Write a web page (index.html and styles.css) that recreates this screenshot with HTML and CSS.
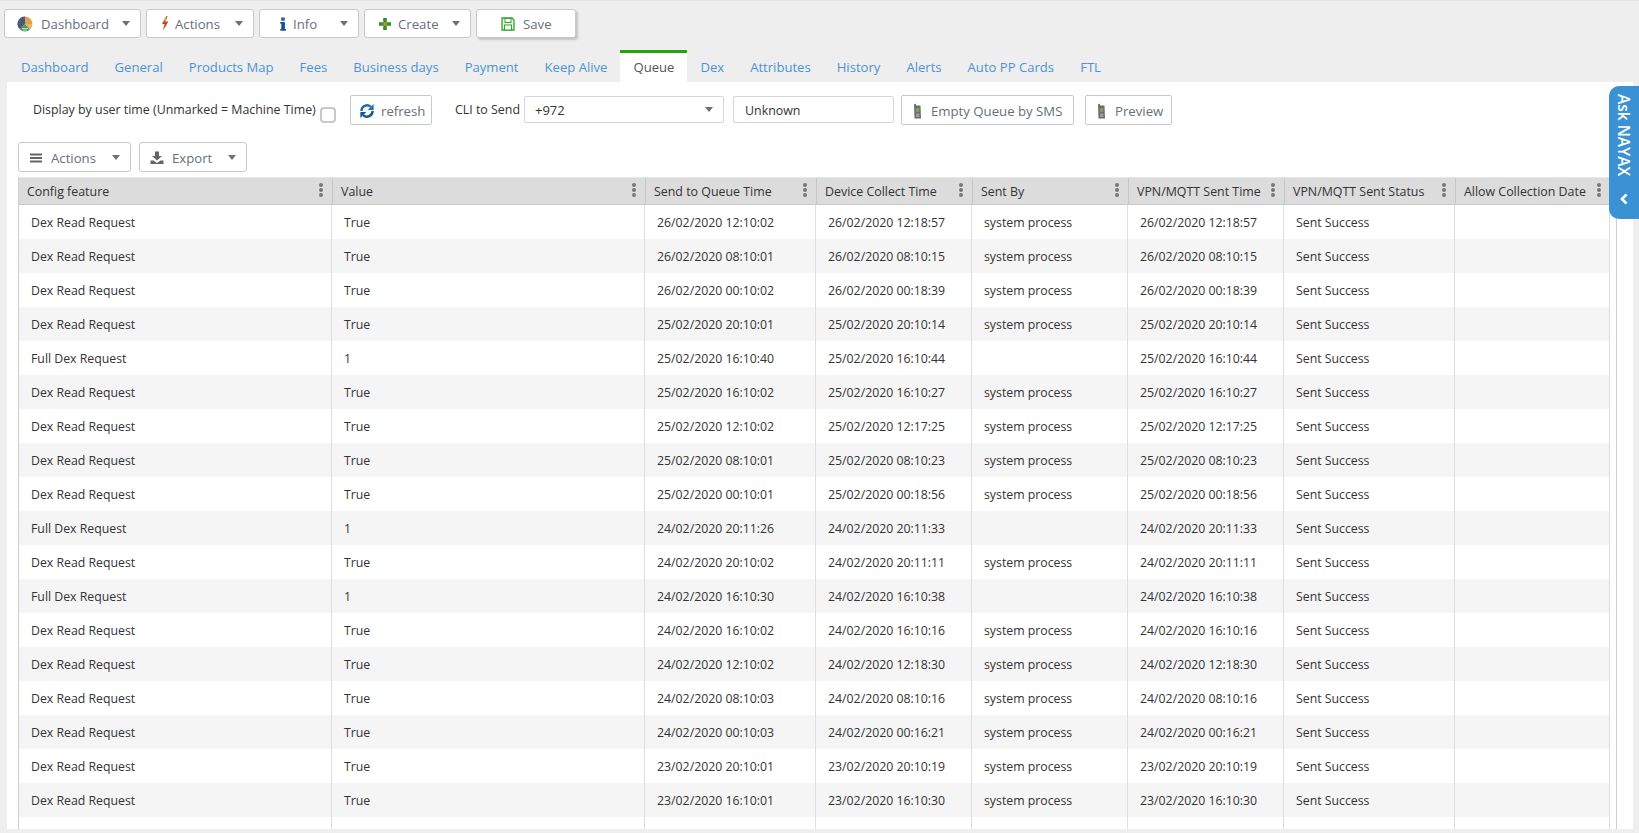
FILE: index.html
```html
<!DOCTYPE html>
<html lang="en">
<head>
<meta charset="utf-8">
<title>Queue</title>
<link rel="stylesheet" href="styles.css">
</head>
<body>
<div class="toolbar">
  <button class="btn tb-dash"><svg class="ico16" viewBox="0 0 16 16"><path d="M8 0.5A7.5 7.5 0 0 0 3 13.6L8 8Z" fill="#4a5a78"/><path d="M8 0.5A7.5 7.5 0 0 1 15.5 8H8Z" fill="#e0a24e"/><path d="M15.5 8A7.5 7.5 0 0 1 13 13.6L8 8Z" fill="#e8b46a"/><path d="M3 13.6A7.5 7.5 0 0 0 13 13.6L8 8Z" fill="#4c9a5a"/><path d="M5 12.5h6M6 14h4" stroke="#cfe8d2" stroke-width=".8"/></svg><span>Dashboard</span><i class="caret"></i></button>
  <button class="btn tb-act"><svg class="ico-s" viewBox="0 0 8 15"><path d="M5.5 0 1 8h2.6L1.8 15 7.4 5.6H4.6L6.6 0Z" fill="#c8401c"/><path d="M5.5 0 3.2 5.5h1.8" fill="#e9a13b"/></svg><span>Actions</span><i class="caret"></i></button>
  <button class="btn tb-info"><svg class="ico-i" viewBox="0 0 6 14"><rect x="1.2" y="0.5" width="3.6" height="3.2" fill="#1c5f9e"/><path d="M0.3 5h4.6v7h1v1.7H0.3V12h1V6.7h-1Z" fill="#1c4f8e"/></svg><span>Info</span><i class="caret"></i></button>
  <button class="btn tb-create"><svg class="ico14" viewBox="0 0 14 14"><path d="M5.2 1h3.6v4.2H13v3.6H8.8V13H5.2V8.8H1V5.2h4.2Z" fill="#2f8f2c"/><rect x="5.2" y="5.2" width="3.6" height="3.6" fill="#b9962a"/></svg><span>Create</span><i class="caret"></i></button>
  <button class="btn btn-save"><svg class="ico14" viewBox="0 0 14 14"><path d="M1 1h10l2 2v10H1Z" fill="#eef7e6" stroke="#2fa52b" stroke-width="1.3"/><rect x="4" y="1.5" width="6" height="4" fill="#fff" stroke="#2fa52b"/><rect x="3.5" y="8" width="7" height="5" fill="#fff" stroke="#2fa52b"/></svg><span>Save</span></button>
</div>

<nav class="tabs">
  <a>Dashboard</a><a>General</a><a>Products Map</a><a>Fees</a><a>Business days</a><a>Payment</a><a>Keep Alive</a><a class="active">Queue</a><a>Dex</a><a>Attributes</a><a>History</a><a>Alerts</a><a>Auto PP Cards</a><a>FTL</a>
</nav>

<main class="panel">
  <div class="filters">
    <label class="lbl-time">Display by user time (Unmarked = Machine Time)</label>
    <span class="check"></span>
    <button class="btn-sm b-refresh"><svg class="ico16" viewBox="0 0 16 16"><path d="M2.4 8a5.6 5.6 0 0 1 9.4-4.1" fill="none" stroke="#1f6fae" stroke-width="2.4"/><path d="M13.6 8a5.6 5.6 0 0 1-9.4 4.1" fill="none" stroke="#14568e" stroke-width="2.4"/><path d="M14.6 1v6H8.8Z" fill="#1f6fae"/><path d="M1.4 15V9h5.8Z" fill="#14568e"/></svg><span>refresh</span></button>
    <label class="lbl-cli">CLI to Send</label>
    <div class="select"><span>+972</span><i class="caret"></i></div>
    <div class="input">Unknown</div>
    <button class="btn-sm b-empty"><svg class="ico-ph" viewBox="0 0 9 16"><path d="M1 1.5 3 0.5v2h4.5L8 15.5H1.5Z" fill="#6d6d68"/><rect x="3" y="5" width="3.4" height="4" fill="#7d9a6a"/><rect x="4" y="6" width="1.4" height="2" fill="#55c13a"/><rect x="3" y="10.5" width="3.4" height="3.5" fill="#9a9a96"/></svg><span>Empty Queue by SMS</span></button>
    <button class="btn-sm b-prev"><svg class="ico-ph" viewBox="0 0 9 16"><path d="M1 1.5 3 0.5v2h4.5L8 15.5H1.5Z" fill="#6d6d68"/><rect x="3" y="5" width="3.4" height="4" fill="#7d9a6a"/><rect x="4" y="6" width="1.4" height="2" fill="#55c13a"/><rect x="3" y="10.5" width="3.4" height="3.5" fill="#9a9a96"/></svg><span>Preview</span></button>
  </div>

  <div class="grid-tools">
    <button class="btn g-act"><svg class="ico14" viewBox="0 0 14 14"><path d="M1 2.5h12v2H1ZM1 6h12v2H1ZM1 9.5h12v2H1Z" fill="#666"/></svg><span>Actions</span><i class="caret"></i></button>
    <button class="btn g-exp"><svg class="ico14" viewBox="0 0 14 14"><path d="M5 0.5h4v4.5h3L7 9.5 2 5h3ZM0.5 9.5h3L7 12l3.5-2.5h3V13H.5Z" fill="#666"/></svg><span>Export</span><i class="caret"></i></button>
  </div>

  <div class="grid">
    <div class="row head">
      <div class="th"><span>Config feature</span><b class="dots"></b></div>
      <div class="th"><span>Value</span><b class="dots"></b></div>
      <div class="th"><span>Send to Queue Time</span><b class="dots"></b></div>
      <div class="th"><span>Device Collect Time</span><b class="dots"></b></div>
      <div class="th"><span>Sent By</span><b class="dots"></b></div>
      <div class="th"><span>VPN/MQTT Sent Time</span><b class="dots"></b></div>
      <div class="th"><span>VPN/MQTT Sent Status</span><b class="dots"></b></div>
      <div class="th"><span>Allow Collection Date</span><b class="dots"></b></div>
    </div>
    <div class="row"><div>Dex Read Request</div><div>True</div><div>26/02/2020 12:10:02</div><div>26/02/2020 12:18:57</div><div>system process</div><div>26/02/2020 12:18:57</div><div>Sent Success</div><div></div></div>
    <div class="row"><div>Dex Read Request</div><div>True</div><div>26/02/2020 08:10:01</div><div>26/02/2020 08:10:15</div><div>system process</div><div>26/02/2020 08:10:15</div><div>Sent Success</div><div></div></div>
    <div class="row"><div>Dex Read Request</div><div>True</div><div>26/02/2020 00:10:02</div><div>26/02/2020 00:18:39</div><div>system process</div><div>26/02/2020 00:18:39</div><div>Sent Success</div><div></div></div>
    <div class="row"><div>Dex Read Request</div><div>True</div><div>25/02/2020 20:10:01</div><div>25/02/2020 20:10:14</div><div>system process</div><div>25/02/2020 20:10:14</div><div>Sent Success</div><div></div></div>
    <div class="row"><div>Full Dex Request</div><div>1</div><div>25/02/2020 16:10:40</div><div>25/02/2020 16:10:44</div><div></div><div>25/02/2020 16:10:44</div><div>Sent Success</div><div></div></div>
    <div class="row"><div>Dex Read Request</div><div>True</div><div>25/02/2020 16:10:02</div><div>25/02/2020 16:10:27</div><div>system process</div><div>25/02/2020 16:10:27</div><div>Sent Success</div><div></div></div>
    <div class="row"><div>Dex Read Request</div><div>True</div><div>25/02/2020 12:10:02</div><div>25/02/2020 12:17:25</div><div>system process</div><div>25/02/2020 12:17:25</div><div>Sent Success</div><div></div></div>
    <div class="row"><div>Dex Read Request</div><div>True</div><div>25/02/2020 08:10:01</div><div>25/02/2020 08:10:23</div><div>system process</div><div>25/02/2020 08:10:23</div><div>Sent Success</div><div></div></div>
    <div class="row"><div>Dex Read Request</div><div>True</div><div>25/02/2020 00:10:01</div><div>25/02/2020 00:18:56</div><div>system process</div><div>25/02/2020 00:18:56</div><div>Sent Success</div><div></div></div>
    <div class="row"><div>Full Dex Request</div><div>1</div><div>24/02/2020 20:11:26</div><div>24/02/2020 20:11:33</div><div></div><div>24/02/2020 20:11:33</div><div>Sent Success</div><div></div></div>
    <div class="row"><div>Dex Read Request</div><div>True</div><div>24/02/2020 20:10:02</div><div>24/02/2020 20:11:11</div><div>system process</div><div>24/02/2020 20:11:11</div><div>Sent Success</div><div></div></div>
    <div class="row"><div>Full Dex Request</div><div>1</div><div>24/02/2020 16:10:30</div><div>24/02/2020 16:10:38</div><div></div><div>24/02/2020 16:10:38</div><div>Sent Success</div><div></div></div>
    <div class="row"><div>Dex Read Request</div><div>True</div><div>24/02/2020 16:10:02</div><div>24/02/2020 16:10:16</div><div>system process</div><div>24/02/2020 16:10:16</div><div>Sent Success</div><div></div></div>
    <div class="row"><div>Dex Read Request</div><div>True</div><div>24/02/2020 12:10:02</div><div>24/02/2020 12:18:30</div><div>system process</div><div>24/02/2020 12:18:30</div><div>Sent Success</div><div></div></div>
    <div class="row"><div>Dex Read Request</div><div>True</div><div>24/02/2020 08:10:03</div><div>24/02/2020 08:10:16</div><div>system process</div><div>24/02/2020 08:10:16</div><div>Sent Success</div><div></div></div>
    <div class="row"><div>Dex Read Request</div><div>True</div><div>24/02/2020 00:10:03</div><div>24/02/2020 00:16:21</div><div>system process</div><div>24/02/2020 00:16:21</div><div>Sent Success</div><div></div></div>
    <div class="row"><div>Dex Read Request</div><div>True</div><div>23/02/2020 20:10:01</div><div>23/02/2020 20:10:19</div><div>system process</div><div>23/02/2020 20:10:19</div><div>Sent Success</div><div></div></div>
    <div class="row"><div>Dex Read Request</div><div>True</div><div>23/02/2020 16:10:01</div><div>23/02/2020 16:10:30</div><div>system process</div><div>23/02/2020 16:10:30</div><div>Sent Success</div><div></div></div>
    <div class="row"><div></div><div></div><div></div><div></div><div></div><div></div><div></div><div></div></div>
  </div>
</main>

<aside class="ask">
  <span class="ask-text">Ask NAYAX</span>
  <svg class="ask-chev" viewBox="0 0 10 12"><path d="M7.5 1.5 3 6l4.5 4.5" fill="none" stroke="#fff" stroke-width="2.6"/></svg>
</aside>
</body>
</html>
```

FILE: styles.css
```css
* { box-sizing: border-box; }
html, body { height: 100%; }
body {
  margin: 0;
  height: 833px;
  overflow: hidden;
  background: #eeeeee;
  border-top: 1px solid #e4e4e4;
  font-family: "Open Sans", "Liberation Sans", sans-serif;
  color: #333;
  display: flex;
  flex-direction: column;
}
button { font: inherit; margin: 0; cursor: pointer; }

.toolbar { display: flex; gap: 5px; padding: 8px 0 0 4px; height: 49px; flex: none; }
.btn {
  display: flex;
  align-items: center;
  height: 29px;
  background: #fff;
  border: 1px solid #c9c9c9;
  border-radius: 3px;
  color: #67707a;
  font-size: 13.2px;
  padding: 0 10px 0 0;
}
.btn span { margin-left: 6px; }
.caret {
  margin-left: auto;
  width: 0; height: 0;
  border-left: 4.5px solid transparent;
  border-right: 4.5px solid transparent;
  border-top: 5px solid #707070;
}
.tb-dash { width: 137px; padding-left: 12px; }
.tb-dash span { margin-left: 8px; }
.tb-act { width: 108px; padding-left: 14px; }
.tb-info { width: 100px; padding-left: 20px; }
.tb-info span { margin-left: 7px; }
.tb-create { width: 107px; padding-left: 13px; }
.btn-save { width: 100px; padding-left: 24px; box-shadow: 2px 2px 2px #c4c4c0; }
.btn-save span { margin-left: 8px; }
.ico16 { width: 16px; height: 16px; flex: none; }
.ico14 { width: 14px; height: 14px; flex: none; }
.ico-s { width: 8px; height: 15px; flex: none; }
.ico-i { width: 6px; height: 14px; flex: none; }
.ico-ph { width: 9px; height: 16px; flex: none; }

.tabs { display: flex; height: 32px; flex: none; padding-left: 8px; }
.tabs a {
  padding: 5px 13px 0;
  border-top: 3px solid transparent;
  font-size: 13.1px;
  line-height: 18px;
  color: #4d93d3;
}
.tabs a.active { background: #fff; border-top-color: #25a50d; color: #555; }

.panel {
  margin: 0 6px 0 7px;
  height: 747px;
  flex: none;
  background: #fff;
  padding: 13px 0 0 11px;
  display: flex;
  flex-direction: column;
  overflow: hidden;
  font-size: 12.4px;
}
.filters { display: flex; align-items: flex-start; height: 47px; flex: none; }
.lbl-time { margin: 6px 0 0 15px; width: 287px; font-size: 12.4px; line-height: 17px; white-space: nowrap; }
.check { width: 16px; height: 16px; margin-top: 12px; border: 2px solid #c8c8c8; border-radius: 4px; background: #fff; }
.btn-sm {
  display: flex;
  align-items: center;
  height: 30px;
  background: #fff;
  border: 1px solid #c9c9c9;
  border-radius: 2px;
  color: #67707a;
  font-size: 13.2px;
  padding: 1px 0 0 8px;
}
.btn-sm span { margin-left: 6px; }
.b-refresh { width: 82px; margin-left: 14px; }
.b-empty, .b-prev { padding-left: 11px; }
.b-empty span, .b-prev span { margin-left: 9px; }
.lbl-cli { margin: 6px 0 0 23px; width: 69px; line-height: 17px; white-space: nowrap; }
.select {
  width: 200px; height: 27px; margin-top: 1px;
  border: 1px solid #d6d6d6; border-radius: 2px;
  display: flex; align-items: center; padding: 0 10px;
  font-size: 13px; color: #333;
}
.input {
  width: 161px; height: 27px; margin: 1px 0 0 9px;
  border: 1px solid #d6d6d6; border-radius: 2px;
  padding: 0 11px; line-height: 27px; font-size: 12.4px; color: #333;
}
.b-empty { width: 173px; margin-left: 7px; }
.b-prev { width: 87px; margin-left: 11px; }

.grid-tools { display: flex; gap: 8px; height: 35px; flex: none; }
.g-act { width: 113px; padding: 1px 10px 0 10px; height: 30px; }
.g-exp { width: 108px; padding: 1px 10px 0 10px; height: 30px; }
.g-act span, .g-exp span { margin-left: 8px; }

.grid {
  flex: 1;
  width: 1599px;
  border-left: 1px solid #cfcfcf;
  border-right: 1px solid #cfcfcf;
  overflow: hidden;
}
.row {
  display: grid;
  grid-template-columns: 313px 313px 171px 156px 156px 156px 171px 155px;
  height: 34px;
  width: 1591px;
}
.row:nth-child(odd) { background: #f5f5f5; }
.row > div {
  border-right: 1px solid #dfdfdf;
  padding: 1px 0 0 12px;
  line-height: 34px;
  font-size: 12.3px;
  white-space: nowrap;
  color: #333;
}
.row.head {
  height: 28px;
  width: 1598px;
  background: #dcdcdc;
  border-top: 1px solid #e6e6e6;
  border-bottom: 1px solid #c8c8c8;
}
.row.head .th {
  border-right: 0;
  border-left: 1px solid #c6c6c6;
  padding: 2px 0 0 8px;
  line-height: 24px;
  font-size: 12.4px;
  display: flex;
  justify-content: space-between;
  align-items: center;
}
.row.head .th:first-child { border-left: 0; padding-left: 8px; }
.dots {
  width: 4px; height: 4px; border-radius: 50%;
  background: #777;
  box-shadow: 0 -5px 0 #777, 0 5px 0 #777;
  margin: -4px 9px 0 0;
}

.ask {
  position: absolute;
  top: 86px; right: 0;
  width: 30px; height: 133px;
  background: #3a92d4;
  border-radius: 10px 0 0 10px;
  color: #fff;
  display: flex;
  flex-direction: column;
  align-items: center;
  padding-top: 8px;
}
.ask-text { writing-mode: vertical-rl; font-size: 15.5px; font-weight: 600; line-height: 18px; }
.ask-chev { width: 10px; height: 12px; position: absolute; top: 107px; left: 10px; }
```
